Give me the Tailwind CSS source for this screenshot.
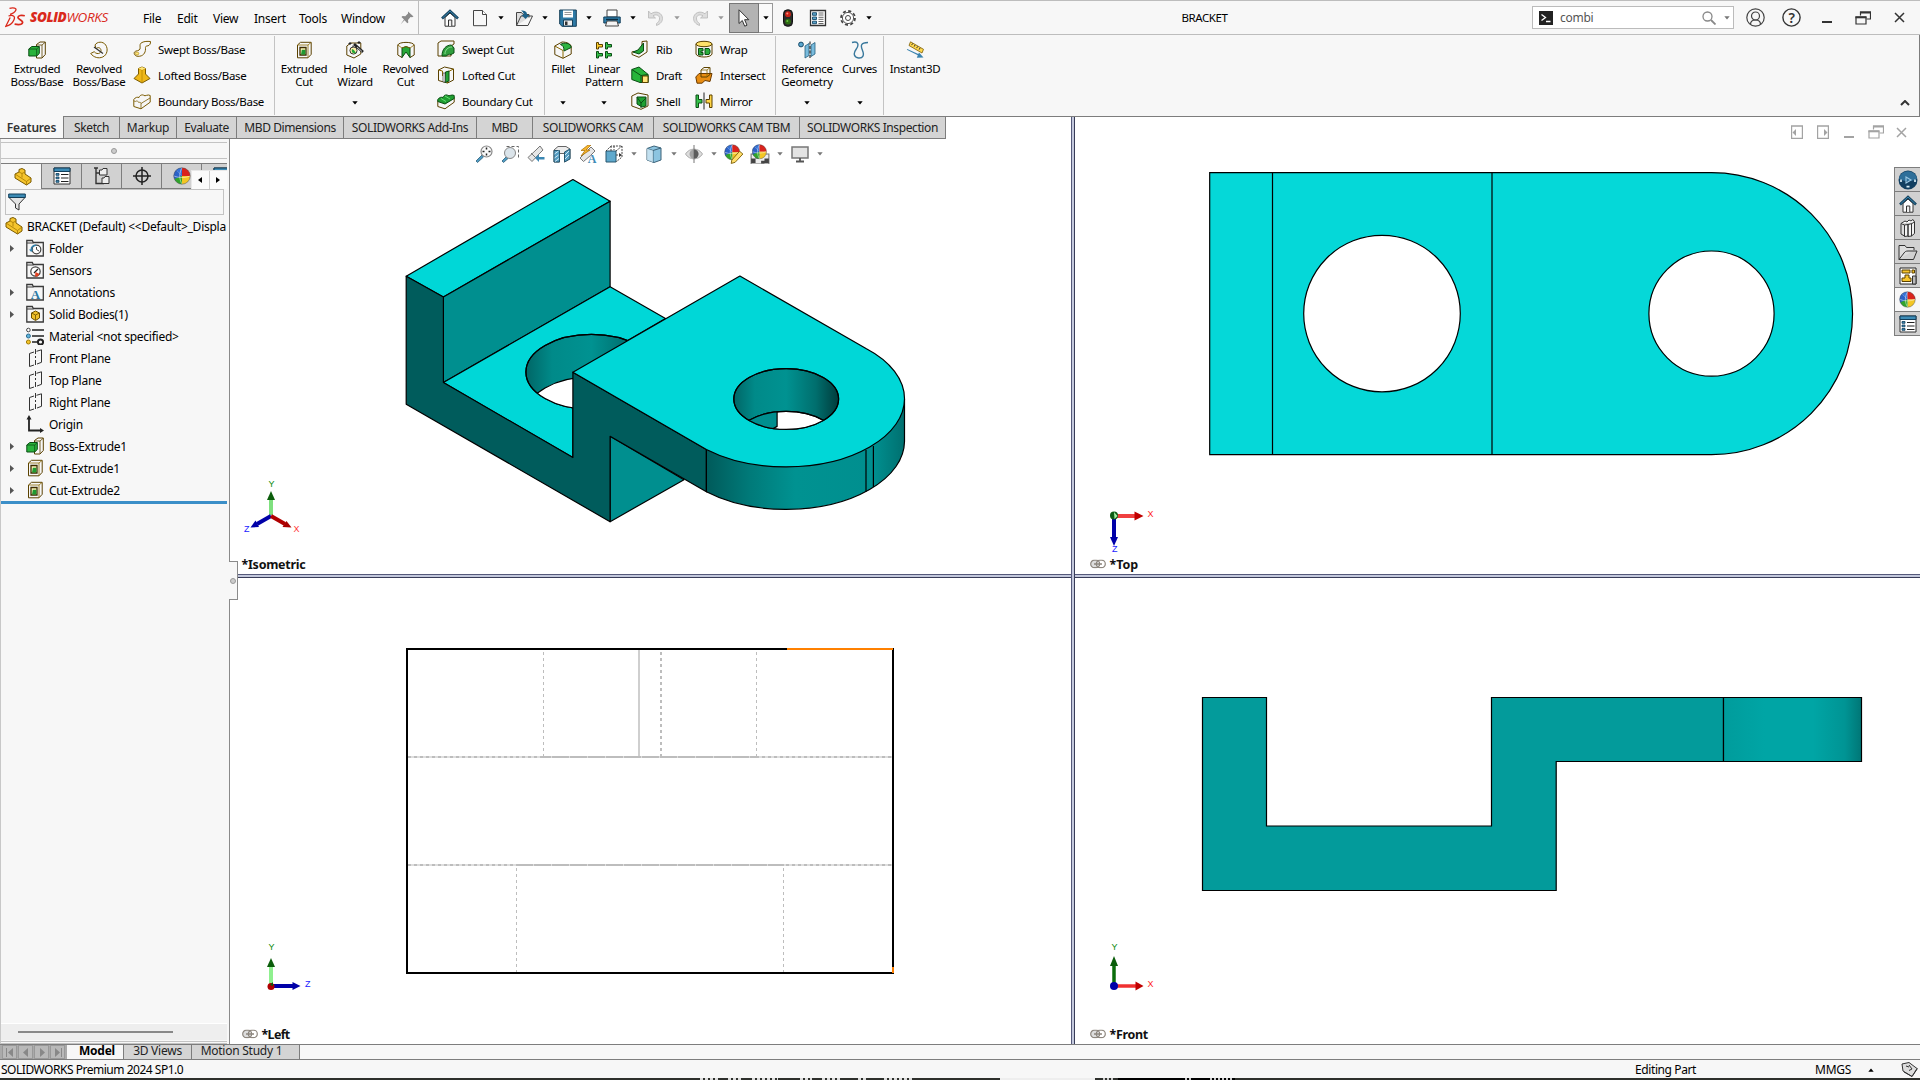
<!DOCTYPE html>
<html lang="en">
<head>
<meta charset="utf-8">
<title>SOLIDWORKS - BRACKET</title>
<script src="https://cdn.jsdelivr.net/npm/@tailwindcss/browser@4"></script>
</head>
<body class="w-[1920px] h-[1080px] overflow-hidden bg-[#f7f7f7] text-black font-['Noto_Sans','Open_Sans',sans-serif] text-[12px] leading-[13px] tracking-[-0.25px]">

<svg class="hidden">
  <defs>
    <linearGradient id="gold" x1="0" y1="0" x2="1" y2="1"><stop offset="0" stop-color="#ffe878"/><stop offset="1" stop-color="#e5ab10"/></linearGradient>
    <linearGradient id="paper" x1="0" y1="0" x2="1" y2="1"><stop offset="0" stop-color="#fff"/><stop offset="1" stop-color="#c8c8c8"/></linearGradient>
  </defs>
  <symbol id="dn" viewBox="0 0 6 4"><path d="M.3.3h5.4L3 3.4z"/></symbol>
  <symbol id="ico-home" viewBox="0 0 18 18"><path d="M4 8.500v8.700h10V8.500L9 4z" fill="#fff" stroke="#333"/><path d="M7.500 17v-6h3.300v6" fill="#eee" stroke="#333"/><path d="M1 9.500 9 2l8 7.500" fill="none" stroke="#123e5a" stroke-width="2.600"/><path d="M1.500 9 9 2l7.500 7" fill="none" stroke="#3a86ad" stroke-width="1"/></symbol>
  <symbol id="ico-new" viewBox="0 0 18 18"><path d="M2.500 1.500h9l4 4v11.200h-13z" fill="url(#paper)" stroke="#444"/><path d="M11.500 1.500v4h4" fill="#fff" stroke="#444"/></symbol>
  <symbol id="ico-open" viewBox="0 0 18 18"><path d="M1.500 16.500v-13h5l1.500 2h6v3" fill="#ddd" stroke="#444"/><path d="m1.500 16.500 4.500-9.500h11.500l-4.500 9.500z" fill="url(#paper)" stroke="#444"/><path d="M6 1.500c4 0 6 1 6 4.500h2.500L10.500 10 6.500 6h2.200c0-2-.7-3-2.700-4.500z" fill="#1d6289"/></symbol>
  <symbol id="ico-save" viewBox="0 0 18 18"><path d="M.7 1h16.600v16.300H3L.7 15z" fill="#2e7aa6" stroke="#173f58"/><path d="M4 1.500h10v7H4z" fill="#fff"/><path d="M5.500 3.500h7M5.500 5.500h7" stroke="#999"/><path d="M4.500 11h9v6h-9z" fill="#eee" stroke="#173f58"/><path d="M6 12.500h2.500V16H6z" fill="#333"/></symbol>
  <symbol id="ico-print" viewBox="0 0 18 18"><path d="M4 1h10v7H4z" fill="#fff" stroke="#444"/><path d="M.8 8h16.400v6H.8z" fill="#2f7fab" stroke="#123e5a"/><path d="M3 10.500h12" stroke="#0d2c40" stroke-width="1.500"/><path d="m4 12-1.500 5h13L14 12z" fill="#f4f4f4" stroke="#444"/></symbol>
  <symbol id="ico-undo" viewBox="0 0 18 18"><path d="M1.500 2v7h7L6 6.800c3-2 7-.5 6.500 3.200-.2 2-1.500 3.500-3 4.500v2c4-1.500 6-4 6-7C15.500 4 9 1 4 4.800z" fill="#ddd" stroke="#b8b8b8" stroke-width=".8"/></symbol>
  <symbol id="ico-light" viewBox="0 0 18 18"><rect x="4.500" y=".8" width="9" height="16.500" rx="4" fill="#2b2b2b" stroke="#111"/><circle cx="9" cy="5.200" r="2.900" fill="#c92318"/><circle cx="8.300" cy="4.500" r="1" fill="#ff8d7e"/><circle cx="9" cy="12.600" r="2.900" fill="#2c6b12"/><circle cx="8.300" cy="12" r="1" fill="#67c23c"/></symbol>
  <symbol id="ico-opts" viewBox="0 0 18 18"><path d="M1.500 1.500h15v15h-15z" fill="#fff" stroke="#333" stroke-width="1.300"/><path d="M3.500 3.700h4v2.600h-4zM3.500 8h4v2.500h-4zM3.500 12.200h4v2.500h-4z" fill="#5aa3cb" stroke="#174a68" stroke-width=".9"/><path d="M9.500 4h5M9.500 6h5M9.500 8.300h5M9.500 10.300h5M9.500 12.500h5M9.500 14.500h5" stroke="#555" stroke-width=".9"/></symbol>
  <symbol id="ico-gear" viewBox="0 0 18 18"><circle cx="9" cy="9" r="7" fill="#fff" stroke="#444" stroke-width="1.800" stroke-dasharray="3.100 2.400"/><circle cx="9" cy="9" r="5.600" fill="#fff" stroke="#555" stroke-width="1"/><circle cx="9" cy="9" r="2.500" fill="#fff" stroke="#444"/></symbol>

  <symbol id="ico-boss" viewBox="0 0 18 18"><path d="M8.500 3.500 12 1h5.300v12.500L14 17H8.500z" fill="url(#gold)" stroke="#5a4100"/><path d="M14 4v12.500M14 4l3-2.600M8.500 4H14" stroke="#5a4100" fill="none" stroke-width=".8"/><path d="m.8 8 3-2.500h7.500v7L8.700 15H.8z" fill="#29b33b" stroke="#0b4d14"/><path d="M.8 8h7.900v7M8.700 8l2.600-2.500" stroke="#0b4d14" fill="none" stroke-width=".8"/></symbol>
  <symbol id="ico-revolve" viewBox="0 0 18 18"><path d="M5 4c2-3.500 8-4 10.700 0s1.500 10-3 12c-4 1.800-9 .5-12-3.500l3.500-1.800c1.500 1.800 4 2.500 5.500 1.300 2-1.500 1.500-4 0-5-1.300-.8-2.600-.3-3.500.8z" fill="url(#gold)" stroke="#7a5a00"/><path d="m4 6 9 6.500" stroke="#333" stroke-width="1.200"/></symbol>
  <symbol id="ico-swept" viewBox="0 0 18 18"><path d="M1.500 12c1-1.500 5-1 5.500-3 .5-3-1-5 2-6.500 2.500-1.300 5-1.200 8.500-1 .3 2-1 4-2.500 4.300-3 .4-2.500 1-2.500 3.200C12.500 13 10 16.500 5 16.300c-3 0-4.500-2.500-3.500-4.300z" fill="url(#gold)" stroke="#7a5a00"/><ellipse cx="4" cy="13.500" rx="1.800" ry="1.500" fill="#ffe67a" stroke="#a87d00" stroke-width=".6"/></symbol>
  <symbol id="ico-loft" viewBox="0 0 18 18"><path d="M5.500 2.500 9 1l3.500 1.500v5.500L17 12.500 9 17l-8-4.500L5.500 8z" fill="#efb81a" stroke="#7a5a00"/><path d="M5.500 2.500 9 4l3.500-1.500M9 4v13" stroke="#b98800" fill="none" stroke-width=".8"/><path d="M5.500 2.500 9 1l3.500 1.500L9 4z" fill="#ffe67a"/></symbol>
  <symbol id="ico-boundary" viewBox="0 0 18 18"><path d="M.8 7.500C2.500 5 4.500 5 6 5.500c1-3 4-3 5-2s4-1.500 6.200 0v6.700L8 16.800.8 14.500z" fill="url(#gold)" stroke="#7a5a00"/><path d="M.8 8.500c2 2.500 3-1 4 1s2.500-.5 3.200 2l9-5.500M8 11.500v5" fill="none" stroke="#7a5a00" stroke-width=".8"/></symbol>
  <symbol id="ico-bcut" viewBox="0 0 18 18"><path d="M.8 8.500 8 11l9.200-5.500v4.700L8 16.800.8 14.500z" fill="url(#gold)" stroke="#5a4100"/><path d="M.8 7.500C2.500 5 4.500 5 6 5.500c1-3 4-3 5-2s4-1.500 6.200 0v3L8 12 .8 9.500z" fill="#1f9e31" stroke="#0b4d14"/><path d="m4 6.500 5 3M8 4l5 3" stroke="#64dd70"/></symbol>
  <symbol id="ico-cut" viewBox="0 0 18 18"><path d="m2.500 4 3-2.700h10.700v12L13 16.800H2.500z" fill="url(#gold)" stroke="#5a4100"/><path d="M2.500 4H13v12.500M13 4l3-2.500" fill="none" stroke="#8a6800" stroke-width=".8"/><path d="M5 6.500h6v7.500H5z" fill="#fff4b8" stroke="#3d2c00" stroke-width="1.300"/><path d="M6.800 8.800h3.600v4.600L6 13.600z" fill="#1f9a32"/></symbol>
  <symbol id="ico-hole" viewBox="0 0 18 18"><path d="m.8 5 4-3h10v11L8 17l-7.200-3z" fill="url(#gold)" stroke="#5a4100"/><circle cx="7.500" cy="9.500" r="3.600" fill="#ffefaa" stroke="#333"/><path d="M6 8c-1 3 .5 5 4 4L8 9z" fill="#25a838"/><path d="m8 3 9 8" stroke="#222" stroke-width="2.600"/><path d="m11 6 5 4.500" stroke="#bbb"/><path d="M4 1v3M2.500 2.500h3M13 0v3M11.500 1.500h3M7 4.500v2" stroke="#222"/></symbol>
  <symbol id="ico-rcut" viewBox="0 0 18 18"><path d="M.8 4C2 .5 16 .5 17.200 4v10L13 16.500 9 8l-4 8.500L.8 14z" fill="url(#gold)" stroke="#5a4100"/><path d="M9 5.500 13 7v9.500L9 11l-4 5.500V7z" fill="#26a838" stroke="#0b4d14"/><path d="M.8 4 5 7l4-1.500L13 7l4.200-3" fill="none" stroke="#8a6800" stroke-width=".8"/></symbol>
  <symbol id="ico-scut" viewBox="0 0 18 18"><path d="m1 3 3-2h13v3l-3 2v10H1z" fill="url(#gold)" stroke="#5a4100"/><path d="M5 16C5 9 9 5 14.500 5l2.500 3v5l-3 1.500c-2-.5-4 0-4.500 1.500z" fill="#2f9e3d" stroke="#0b4d14"/><path d="M8 14c0-4 3-7 7-7" stroke="#8adf8f" fill="none"/></symbol>
  <symbol id="ico-lcut" viewBox="0 0 18 18"><path d="m1.500 4 6-3 9 2v11l-6 3-9-2.500z" fill="url(#gold)" stroke="#5a4100"/><path d="M10.500 17V6l6-3M1.500 4l4 1v5" fill="none" stroke="#8a6800"/><path d="m8.500 6 3.500-1v10l-4 1.500z" fill="#23a335" stroke="#0b4d14"/><path d="M6 7h2v9H6z" fill="#fff" stroke="#444" stroke-width=".7"/></symbol>
  <symbol id="ico-fillet" viewBox="0 0 18 18"><path d="M.8 5 8 1c5 0 9.200 2 9.200 5v7L9 17.300.8 13.500z" fill="url(#gold)" stroke="#5a4100"/><path d="M.8 5 9 9.500v7.800" fill="none" stroke="#8a6800"/><path d="M6.500 3.500C10 1 17 2 17.200 6.500L10 10C10 6 9 4.500 6.500 3.500z" fill="#2fb441" stroke="#0b4d14"/></symbol>
  <symbol id="ico-lpat" viewBox="0 0 18 18"><path d="M1.500 1.500h2v2h4v2.500h-4v2h-2z" fill="#ffcf2e" stroke="#5a4100"/><path d="M10.500 1.500h2v2h4v2.500h-4v2h-2zM1.500 10.500h2v2h4v2.500h-4v2h-2zM10.500 10.500h2v2h4v2.500h-4v2h-2z" fill="#35c24a" stroke="#0b4d14"/></symbol>
  <symbol id="ico-rib" viewBox="0 0 18 18"><path d="m11 1.500 5-.5v11L8 17.300 1 14.500v-2.700l10-1z" fill="url(#gold)" stroke="#5a4100"/><path d="M12.500 3v8L8 14l-6-2 5-2z" fill="#27a63a" stroke="#0b4d14"/></symbol>
  <symbol id="ico-draft" viewBox="0 0 18 18"><path d="M.8 3.500 8 1l9.200 7.500v8H9L.8 13.500z" fill="#27b53b" stroke="#0b4d14"/><path d="M.8 3.500 10 9.500l7-1M10 9.500v7" fill="none" stroke="#0b4d14"/><path d="M11.500 10h5.500v6.500h-5.500z" fill="#ffe57a" stroke="#5a4100"/></symbol>
  <symbol id="ico-shell" viewBox="0 0 18 18"><path d="M.8 4 7 1l10 2v11l-7 3.300L.8 14z" fill="url(#gold)" stroke="#5a4100"/><path d="M6 5h9v9l-4 1-5-3z" fill="#1fa032" stroke="#0b4d14"/><path d="m6 5 4 6v5M10 11l5-5" stroke="#0b4d14" fill="none"/></symbol>
  <symbol id="ico-wrap" viewBox="0 0 18 18"><path d="M1 4v10c1 4 15 4 16 0V4z" fill="url(#gold)" stroke="#5a4100"/><ellipse cx="9" cy="4" rx="8" ry="2.700" fill="#ffe26a" stroke="#5a4100"/><path d="M3.500 8.500H8V11H6v1.500h2V15H3.500zM10 8.500h4c1.500 2 1.500 4 0 6h-4z" fill="#2aaf3d" stroke="#0b4d14"/></symbol>
  <symbol id="ico-inter" viewBox="0 0 18 18"><path d="M.8 11 4 7.500h13l-2 8-5-1-3 2.700H2z" fill="#e88d12" stroke="#6b3a00"/><path d="M6 4 9 1.500h6v7L12 11H6z" fill="url(#gold)" stroke="#5a4100"/><path d="M6 4h6v7M12 4l3-2.500" stroke="#8a6800" fill="none" stroke-width=".8"/></symbol>
  <symbol id="ico-mirror" viewBox="0 0 18 18"><path d="M9 .5v17" stroke="#222"/><path d="M1 3h2.500v4.500H7v3.500H3.500v4.500H1z" fill="#35c24a" stroke="#0b4d14"/><path d="M17 3h-2.500v4.500H11v3.500h3.500v4.500H17z" fill="#ffd545" stroke="#5a4100"/></symbol>
  <symbol id="ico-refgeo" viewBox="0 0 18 18"><circle cx="3" cy="3.500" r="2.400" fill="#5ba6ce" stroke="#174a68"/><path d="m7 5 4-2.500v12L7 17zM13 4l4-2.500v11.500l-4 2.500z" fill="#79bbdd" stroke="#27607f" stroke-width=".8"/><path d="M12 .5v17" stroke="#111" stroke-dasharray="3 1.500"/></symbol>
  <symbol id="ico-curves" viewBox="0 0 18 18"><path d="M1 1.500c7-2 7 3 4 7s-2 8 2.500 8.500 6-3 4-7.500-2-8 5.500-8" fill="none" stroke="#39789c" stroke-width="1.400"/></symbol>
  <symbol id="ico-inst" viewBox="0 0 18 18"><path d="m4.500.8 13 7.500-1.500 3.700L3 4.500z" fill="#ffd84e" stroke="#7a5a00" stroke-width=".8"/><path d="m6.500 2.500-.8 1.600M9 4l-.8 1.600M11.500 5.500l-.8 1.600M14 7l-.8 1.600" stroke="#333"/><path d="m.8 8.800 11 5.500-1 2.500 6.700-.4-4.500-5-.7 1.500-11-5z" fill="#3a83ae"/></symbol>

  <symbol id="ico-part" viewBox="0 0 18 18"><path d="m1 6 4-2V1.500L8 .5l3 1.500v4l6 4v4l-4.500 3L1 10z" fill="#f5c42c" stroke="#7a5a00"/><path d="m1 6 11.500 7.500V17M12.500 13.500 17 10M5 4l3 1.500v4M8 5.500 11 4" fill="none" stroke="#a67a00" stroke-width=".8"/></symbol>
  <symbol id="ico-prop" viewBox="0 0 18 18"><path d="M1 1h16v16H1z" fill="#fff" stroke="#333"/><path d="M1 1h16v3.500H1z" fill="#3e8cb6" stroke="#123e5a"/><path d="M3 6.500h3v1.800H3zM3 10h3v1.800H3zM3 13.500h3v1.800H3z" fill="#3e8cb6" stroke="#123e5a" stroke-width=".8"/><path d="M8 7.500h7.500M8 11h7.500M8 14.500h7.500" stroke="#222"/></symbol>
  <symbol id="ico-config" viewBox="0 0 18 18"><path d="M3 1v15.500h8M3 6h5M1 1h4" fill="none" stroke="#333" stroke-width="1.400"/><path d="M6.500 3H9l1-1.500h4V8H6.500zM9 11h2l1-1.500h4v7H9z" fill="#eee" stroke="#333"/></symbol>
  <symbol id="ico-dimx" viewBox="0 0 18 18"><circle cx="9" cy="9" r="6" fill="none" stroke="#222" stroke-width="1.500"/><path d="M9 0v18M0 9h18" stroke="#222" stroke-width="1.500"/></symbol>
  <symbol id="ico-ball" viewBox="0 0 18 18"><path d="M9 9 3 3a8.200 8.200 0 0 1 6-2.300z" fill="#3573d8"/><path d="M9 9 2.500 14A8.200 8.200 0 0 1 3 3z" fill="#2b62c8"/><path d="M9 9V.7A8.200 8.200 0 0 1 17.200 9z" fill="#d9231d"/><path d="M9 9h8.200A8.200 8.200 0 0 1 9 17.200z" fill="#f3c623"/><path d="M9 9v8.200A8.200 8.200 0 0 1 1.500 12z" fill="#30a42b"/><path d="M9 .9c-3 5-3 11 0 16.200M1 9c5 2 11 2 16 0" stroke="#fff" stroke-opacity=".55" fill="none" stroke-width=".9"/><circle cx="9" cy="9" r="8.200" fill="none" stroke="#444" stroke-opacity=".45"/></symbol>
  <symbol id="ico-funnel" viewBox="0 0 18 18"><path d="M1 4.500h16L11 11v6l-3.500-2V11z" fill="#e4e4e4" stroke="#333"/><path d="M.7 1h16.600v3.500H.7z" fill="#3b8ab4" stroke="#123e5a"/></symbol>
  <symbol id="folder" viewBox="0 0 18 18"><path d="M.8 17V1.500h5.500l1 2h10V17z" fill="url(#paper)" stroke="#3b3b3b" stroke-width="1.300"/><path d="M1 4h6.500" stroke="#3b3b3b"/></symbol>
  <symbol id="ico-folder" viewBox="0 0 18 18"><use href="#folder" width="18" height="18"/><circle cx="10.500" cy="10.500" r="4.300" fill="#fff" stroke="#444" stroke-width="1.200"/><path d="M10.500 8v2.500L13 12" fill="none" stroke="#444"/><path d="M3 10.500h4.500L5.200 13z" fill="#2f7fab"/><path d="M5.200 11c0-3 2-4.800 5-4.800" fill="none" stroke="#2f7fab" stroke-width="1.400"/></symbol>
  <symbol id="ico-sensor" viewBox="0 0 18 18"><use href="#folder" width="18" height="18"/><circle cx="9.500" cy="10.500" r="4.700" fill="#fff" stroke="#444" stroke-width="1.200"/><path d="m8 12 4-4" stroke="#222" stroke-width="1.300"/><path d="m9.500 11 4 2-2 2.500h-2.500z" fill="#e2401f"/></symbol>
  <symbol id="ico-annot" viewBox="0 0 18 18"><use href="#folder" width="18" height="18"/><text x="9.200" y="15.500" font-family="Liberation Serif" font-size="13" font-weight="bold" text-anchor="middle" fill="#2a7aa5">A</text></symbol>
  <symbol id="ico-solid" viewBox="0 0 18 18"><use href="#folder" width="18" height="18"/><path d="m5.500 8 4-2 4 2v5l-4 2.500-4-2.500z" fill="#f0c02a" stroke="#6b4f00"/><path d="m5.500 8 4 2 4-2M9.500 10v5" fill="none" stroke="#6b4f00" stroke-width=".8"/></symbol>
  <symbol id="ico-mat" viewBox="0 0 18 18"><path d="M6 3h12M6 9h12M6 15h5" stroke="#222" stroke-width="1.600"/><circle cx="2.400" cy="3" r="1.800" fill="#fff" stroke="#444"/><circle cx="2.400" cy="9" r="2" fill="#5fb4dc" stroke="#2b6c90"/><circle cx="2.400" cy="15" r="2" fill="#f6c52b" stroke="#a07a00"/><circle cx="14.500" cy="15" r="2.600" fill="none" stroke="#222" stroke-width="2"/></symbol>
  <symbol id="ico-plane" viewBox="0 0 18 18"><path d="M3.500 4.500 8 3M10.500 2.300l5-1.500v12.500l-4.500 1.700M8 16l-4.500 1.500v-13" fill="none" stroke="#333"/><path d="M9.500 0v18" stroke="#333" stroke-dasharray="5 2 2 2"/></symbol>
  <symbol id="ico-origin" viewBox="0 0 18 18"><path d="M3 3v12.500h12" fill="none" stroke="#222" stroke-width="1.800"/><path d="M.5 4.500 3 0l2.500 4.500zM14 13l4 2.500-4 2.500z" fill="#222"/></symbol>

  <symbol id="ico-fit" viewBox="0 0 18 18"><path d="m7 10-6 6 1.500 1.500L8.500 12z" fill="#4e9cc4" stroke="#2d5e78" stroke-width=".8"/><circle cx="11.500" cy="6.500" r="5.500" fill="#fafafa" stroke="#888" stroke-width="1.200"/><path d="M11.500 2.500v2M11.500 8.500v2M7.500 6.500h2M13.500 6.500h2" stroke="#222" stroke-width="1.500"/></symbol>
  <symbol id="ico-area" viewBox="0 0 18 18"><path d="M5.500 1.500h12v11" fill="none" stroke="#666" stroke-dasharray="3 2"/><path d="m5 12-4 4 1.500 1.500L7 13.500z" fill="#4e9cc4" stroke="#2d5e78" stroke-width=".8"/><circle cx="9" cy="8" r="5.500" fill="#dbe4ea" stroke="#888"/></symbol>
  <symbol id="ico-prev" viewBox="0 0 18 18"><path d="m13 1-4 4-8 7.500 4 4L12 9l4-4z" fill="#e6e6e6" stroke="#777"/><path d="m4 8 5 5" stroke="#777"/><path d="m8 13 4-3.500V12h5.500v2.500H12V17z" fill="#3c87b3"/></symbol>
  <symbol id="ico-sect" viewBox="0 0 18 18"><path d="m1 5 4-3.500h8L17 4v9.500l-5.500 3.500V8.500H6.500V17H1z" fill="#ececec" stroke="#666"/><path d="M1 5.500h5.500V17H1zM11.500 7 17 4v10l-5.500 3z" fill="#559dc2" stroke="#28566e"/><path d="m1.500 9 4-3M1.500 13l4-3M2 16.500l4-3M12 10l4-4M12 14l4-4" stroke="#cfe8f5"/></symbol>
  <symbol id="ico-dyn" viewBox="0 0 18 18"><path d="m12 2-4 4-7 7 3.500 3.500 7-6L16 6z" fill="#e6e6e6" stroke="#777"/><path d="m9 0-7 5.500h4L2 11l9-6H7l5-5z" fill="#f6b52e" stroke="#a66b00" stroke-width=".7"/><text x="13" y="17.500" font-family="Liberation Serif" font-weight="bold" font-size="12" text-anchor="middle" fill="#3f8cb8">A</text></symbol>
  <symbol id="ico-orient" viewBox="0 0 18 18"><path d="M1 6h10v11H1z" fill="#5fa9cd" stroke="#28566e"/><path d="m1 6 5-5h11v11l-6 5M11 6l6-5M6 1v5M11 10h4M9 1v4" fill="none" stroke="#444" stroke-dasharray="2 1"/><path d="m14 8 3 2-3 2z" fill="#333"/></symbol>
  <symbol id="ico-disp" viewBox="0 0 18 18"><path d="m2 3.500 7-2.500 7 2v12l-7 2.500-7-2.500z" fill="#8cc4e0" stroke="#3c6379"/><path d="m2 3.500 6 2 8-2.500M8 5.500v12" fill="none" stroke="#3c6379"/><path d="m2 3.500 6 2v11.700L2 15z" fill="#d9edf7" opacity=".7"/></symbol>
  <symbol id="ico-eye" viewBox="0 0 18 18"><path d="M.5 9c4-6.500 13-6.500 17 0-4 6.500-13 6.500-17 0z" fill="#ddd" stroke="#aaa"/><circle cx="9" cy="9" r="4.500" fill="#a3a3a3"/><path d="M9 0v18" stroke="#777"/><path d="M9 4.500a4.500 4.500 0 0 1 0 9z" fill="#5c5c5c"/></symbol>
  <symbol id="ico-editapp" viewBox="0 0 18 18"><use href="#ico-ball" width="15" height="15"/><path d="m7 14.500 7-8 3 2.500-7 7.500-3.500 1z" fill="#ffdf6b" stroke="#7a5a00" stroke-width=".8"/></symbol>
  <symbol id="ico-scene" viewBox="0 0 18 18"><path d="M1 9h16v9H1z" fill="#eee" stroke="#777"/><path d="M1 13h4v4H1zM5 9h3v4H5zM13 13h4v4h-4zM10 15h3v2.500h-3z" fill="#444"/><use href="#ico-ball" x="1.500" width="14" height="14"/></symbol>
  <symbol id="ico-monitor" viewBox="0 0 18 18"><path d="M1 2h16v11H1z" fill="#e3e3e3" stroke="#777" stroke-width="1.500"/><path d="M9 13v3.500M5 16.500h8" stroke="#555" stroke-width="1.800"/></symbol>

  <symbol id="ico-books" viewBox="0 0 18 18"><path d="M2 4.500 5.500 6v11L2 15z" fill="#ddd" stroke="#333"/><path d="M5.500 6 9 5.500V17l-3.500.5zM9 5.500l3.500-.8V17L9 17.500zM12.500 4.700 15.500 3v11.500L12.500 17z" fill="#f4f4f4" stroke="#333"/><path d="M2 4.500 6 2l2 1 2-2 2 1 2-1.500L15.500 3" fill="#fff" stroke="#333"/></symbol>
  <symbol id="ico-fold2" viewBox="0 0 20 18"><path d="M1 16.500V2.500h6l1.500 2H16V7" fill="#ddd" stroke="#333"/><path d="m1 16.500 5-6.500c1-1.500 2-2 4-2h9l-3.500 8.500z" fill="url(#paper)" stroke="#333"/></symbol>
  <symbol id="ico-view" viewBox="0 0 18 18"><path d="M1 1h16v16H1z" fill="#fff" stroke="#222"/><path d="M3 3h8v3H3zM13 3h2.500v3H13zM6 8h4v3h2v3.500H3V11h3z" fill="#f6c52b" stroke="#5a4100"/><path d="M13.500 9H17v8h-3.500z" fill="#bbb" stroke="#333"/></symbol>
  <symbol id="ico-3dx" viewBox="0 0 20 20"><circle cx="10" cy="10" r="9.500" fill="#123f61"/><path d="M1 8.500a9.200 9.200 0 0 1 18 0c-5 3.500-13 3.500-18 0z" fill="#2f6f9a"/><path d="m8 7 5 3-5 3z" fill="none" stroke="#9cc8e4" stroke-width="1.100"/><path d="M3 9.500v2.500M17 9.500v2.500M8.500 16.700h3" stroke="#d9edf7" stroke-width="1.700"/></symbol>
  <symbol id="ico-link" viewBox="0 0 16 9"><rect x=".7" y=".7" width="9" height="7.500" rx="3.700" fill="#ddd" stroke="#8d867e" stroke-width="1.200"/><rect x="6.300" y=".7" width="9" height="7.500" rx="3.700" fill="none" stroke="#8d867e" stroke-width="1.200"/><path d="M4 4.500h8" stroke="#8d867e" stroke-width="1.300"/></symbol>
  <symbol id="ico-restore" viewBox="0 0 16 14"><path d="M5.500 4.500v-3.500h10v7h-4" fill="none" stroke="currentColor" stroke-width="1.200"/><path d="M5 1.500h11" stroke="currentColor" stroke-width="2"/><path d="M1 6h10v7H1z" fill="none" stroke="currentColor" stroke-width="1.200"/><path d="M.4 6.300h11" stroke="currentColor" stroke-width="2"/></symbol>
</svg>

<div class="flex flex-col w-[1920px] h-[1080px]">

  <!-- Title bar -->
  <header class="flex items-center h-[35px] shrink-0 border-t border-b border-[#bdbdbd] bg-[#f7f7f7]">
    <div class="flex items-center w-[143px] pl-[5px] text-[#da291c]">
      <svg class="w-[21px] h-[21px]" viewBox="0 0 21 21" fill="none" stroke="#da291c"><path d="M4.500 1.300c4-.9 7.300-.2 6.300 2C9.800 5.500 7.500 6.800 5 7.300M3.500 9c4.500-1.500 7 .2 5.500 3.700C7.700 15.800 4 18.600.8 19.300L5.200 10.500" stroke-width="1.300"/><path d="M19.800 8.800c-3.500-.9-6.600-.3-6.900 1.500-.3 2 5.300 3 4.700 5.300-.5 2-4.300 2.200-8 1.600" stroke-width="1.700"/></svg>
      <span class="ml-1 font-['Open_Sans','Noto_Sans',sans-serif] text-[13.500px] tracking-[-0.4px] italic whitespace-nowrap"><b class="font-extrabold">SOLID</b>WORKS</span>
    </div>
    <nav class="flex items-center pt-[2px]">
      <span class="w-[34px]">File</span><span class="w-[36px]">Edit</span><span class="w-[41px]">View</span><span class="w-[45px]">Insert</span><span class="w-[42px]">Tools</span><span class="w-[54px]">Window</span>
    </nav>
    <div class="flex items-center justify-center w-[24px] h-full border-r border-[#bdbdbd]">
      <svg class="w-[14px] h-[14px]" viewBox="0 0 14 14"><path d="m8 .5 5.500 5-1.500.8-1.500-.3-2.500 3 .3 2.500-1 .8-2.800-3-4 4.200 3.500-5L1.500 6l1-1 2.800.2L8 2.500z" fill="#8a8a8a"/></svg>
    </div>
    <div class="flex items-center pl-[22px] h-full text-[#333]">
      <svg class="size-[18px] mr-3"><use href="#ico-home"/></svg>
      <svg class="size-[18px]"><use href="#ico-new"/></svg><span class="flex justify-center w-[26px] pr-0.5"><svg class="w-[6px] h-[4px]"><use href="#dn"/></svg></span>
      <svg class="size-[18px]"><use href="#ico-open"/></svg><span class="flex justify-center w-[26px] pr-0.5"><svg class="w-[6px] h-[4px]"><use href="#dn"/></svg></span>
      <svg class="size-[18px]"><use href="#ico-save"/></svg><span class="flex justify-center w-[26px] pr-0.5"><svg class="w-[6px] h-[4px]"><use href="#dn"/></svg></span>
      <svg class="size-[18px]"><use href="#ico-print"/></svg><span class="flex justify-center w-[26px] pr-0.5"><svg class="w-[6px] h-[4px]"><use href="#dn"/></svg></span>
      <svg class="size-[18px]"><use href="#ico-undo"/></svg><span class="flex justify-center w-[26px] pr-0.5"><svg class="w-[6px] h-[4px] fill-[#999]"><use href="#dn"/></svg></span>
      <svg class="size-[18px] -scale-x-100"><use href="#ico-undo"/></svg><span class="flex justify-center w-[20px] pl-1"><svg class="w-[6px] h-[4px] fill-[#999]"><use href="#dn"/></svg></span>
      <span class="flex items-center justify-center w-[30px] h-[30px] bg-[#b3b3b3] border border-[#777]"><svg class="w-[14px] h-[18px]" viewBox="0 0 14 18"><path d="M2 .8v13.700l3.300-3 2.400 5.700 2.300-1-2.400-5.500h4.200z" fill="#fff" stroke="#333"/></svg></span>
      <span class="flex items-center justify-center w-[14px] h-[30px] border border-l-0 border-[#999] bg-[#fafafa]"><svg class="w-[6px] h-[4px]"><use href="#dn"/></svg></span>
      <svg class="size-[18px] ml-1.5"><use href="#ico-light"/></svg>
      <svg class="size-[18px] ml-3"><use href="#ico-opts"/></svg>
      <svg class="size-[18px] ml-3"><use href="#ico-gear"/></svg>
      <span class="flex justify-center w-[26px] pr-0.5"><svg class="w-[6px] h-[4px]"><use href="#dn"/></svg></span>
    </div>
    <div class="flex-1 text-center pr-[6px] text-[11.500px] tracking-[-0.4px]">BRACKET</div>
    <div class="flex items-center w-[202px] h-[23px] border border-[#bbb] bg-white mr-[3px] pl-[6px] pr-[3px]">
      <svg class="w-[14px] h-[14px]" viewBox="0 0 14 14"><path d="M0 0h14v14H0z" fill="#222"/><path d="m2.500 3.500 4 3-4 3M7 10.500h4.500" fill="none" stroke="#fff" stroke-width="1.300"/></svg>
      <span class="ml-[7px] flex-1 text-[#555] -mt-px">combi</span>
      <svg class="w-[14px] h-[14px] mr-2" viewBox="0 0 14 14"><circle cx="5.500" cy="5.500" r="4.500" fill="none" stroke="#888" stroke-width="1.300"/><path d="m9 9 4.500 4.500" stroke="#888" stroke-width="1.800"/></svg>
      <svg class="w-[6px] h-[4px] fill-[#777]"><use href="#dn"/></svg>
    </div>
    <div class="flex items-center w-[183px] text-[#333]">
      <span class="flex justify-center w-[36px]"><svg class="size-[19px]" viewBox="0 0 19 19" fill="none" stroke="#444" stroke-width="1.200"><circle cx="9.500" cy="9.500" r="8.700"/><circle cx="9.500" cy="8" r="4"/><path d="M4.500 16.500c0-3 2-4.500 5-4.500s5 1.500 5 4.500"/></svg></span>
      <span class="flex justify-center w-[36px]"><svg class="size-[19px]" viewBox="0 0 19 19"><circle cx="9.500" cy="9.500" r="8.600" fill="none" stroke="#333" stroke-width="1.400"/><text x="9.500" y="14.500" text-anchor="middle" font-size="14" font-weight="600" fill="#333">?</text></svg></span>
      <span class="flex justify-center w-[36px] pt-[9px]"><i class="block w-[10px] h-[2px] bg-[#333]"></i></span>
      <span class="flex justify-center w-[36px]"><svg class="w-[16px] h-[14px]"><use href="#ico-restore"/></svg></span>
      <span class="flex justify-center w-[36px]"><svg class="size-[11px]" viewBox="0 0 11 11"><path d="m1 1 9 9M10 1l-9 9" stroke="#333" stroke-width="1.500"/></svg></span>
    </div>
  </header>

  <!-- Command manager -->
  <section class="flex h-[82px] shrink-0 border-b border-[#7d7d7d] text-center text-[11.500px] tracking-[-0.3px]">
    <div class="flex pl-[6px] border-r border-[#c3c3c3] my-px w-[275px]">
      <div class="flex flex-col items-center w-[62px] pt-[5px]"><svg class="size-[18px] mb-[3px]"><use href="#ico-boss"/></svg>Extruded<br>Boss/Base</div>
      <div class="flex flex-col items-center w-[62px] pt-[5px]"><svg class="size-[18px] mb-[3px]"><use href="#ico-revolve"/></svg>Revolved<br>Boss/Base</div>
      <div class="flex flex-col pl-[3px] text-left whitespace-nowrap">
        <span class="flex items-center h-[26px] gap-[7px]"><svg class="size-[18px]"><use href="#ico-swept"/></svg>Swept Boss/Base</span>
        <span class="flex items-center h-[26px] gap-[7px]"><svg class="size-[18px]"><use href="#ico-loft"/></svg>Lofted Boss/Base</span>
        <span class="flex items-center h-[26px] gap-[7px]"><svg class="size-[18px]"><use href="#ico-boundary"/></svg>Boundary Boss/Base</span>
      </div>
    </div>
    <div class="flex pl-[3px] border-r border-[#c3c3c3] my-px w-[270px]">
      <div class="flex flex-col items-center w-[52px] pt-[5px]"><svg class="size-[18px] mb-[3px]"><use href="#ico-cut"/></svg>Extruded<br>Cut</div>
      <div class="flex flex-col items-center w-[50px] pt-[5px]"><svg class="size-[18px] mb-[3px]"><use href="#ico-hole"/></svg>Hole<br>Wizard<svg class="w-[6px] h-[4px] mt-[13px]"><use href="#dn"/></svg></div>
      <div class="flex flex-col items-center w-[51px] pt-[5px]"><svg class="size-[18px] mb-[3px]"><use href="#ico-rcut"/></svg>Revolved<br>Cut</div>
      <div class="flex flex-col pl-[6px] text-left whitespace-nowrap">
        <span class="flex items-center h-[26px] gap-[7px]"><svg class="size-[18px]"><use href="#ico-scut"/></svg>Swept Cut</span>
        <span class="flex items-center h-[26px] gap-[7px]"><svg class="size-[18px]"><use href="#ico-lcut"/></svg>Lofted Cut</span>
        <span class="flex items-center h-[26px] gap-[7px]"><svg class="size-[18px]"><use href="#ico-bcut"/></svg>Boundary Cut</span>
      </div>
    </div>
    <div class="flex border-r border-[#c3c3c3] my-px w-[231px]">
      <div class="flex flex-col items-center w-[36px] pt-[5px]"><svg class="size-[18px] mb-[3px]"><use href="#ico-fillet"/></svg>Fillet<svg class="w-[6px] h-[4px] mt-[26px]"><use href="#dn"/></svg></div>
      <div class="flex flex-col items-center w-[46px] pt-[5px]"><svg class="size-[18px] mb-[3px]"><use href="#ico-lpat"/></svg>Linear<br>Pattern<svg class="w-[6px] h-[4px] mt-[13px]"><use href="#dn"/></svg></div>
      <div class="flex flex-col pl-[4px] text-left w-[64px]">
        <span class="flex items-center h-[26px] gap-[7px]"><svg class="size-[18px]"><use href="#ico-rib"/></svg>Rib</span>
        <span class="flex items-center h-[26px] gap-[7px]"><svg class="size-[18px]"><use href="#ico-draft"/></svg>Draft</span>
        <span class="flex items-center h-[26px] gap-[7px]"><svg class="size-[18px]"><use href="#ico-shell"/></svg>Shell</span>
      </div>
      <div class="flex flex-col pl-[4px] text-left">
        <span class="flex items-center h-[26px] gap-[7px]"><svg class="size-[18px]"><use href="#ico-wrap"/></svg>Wrap</span>
        <span class="flex items-center h-[26px] gap-[7px]"><svg class="size-[18px]"><use href="#ico-inter"/></svg>Intersect</span>
        <span class="flex items-center h-[26px] gap-[7px]"><svg class="size-[18px]"><use href="#ico-mirror"/></svg>Mirror</span>
      </div>
    </div>
    <div class="flex border-r border-[#c3c3c3] my-px w-[108px]">
      <div class="flex flex-col items-center w-[62px] pt-[5px]"><svg class="size-[18px] mb-[3px]"><use href="#ico-refgeo"/></svg>Reference<br>Geometry<svg class="w-[6px] h-[4px] mt-[13px]"><use href="#dn"/></svg></div>
      <div class="flex flex-col items-center w-[43px] pt-[5px]"><svg class="size-[18px] mb-[3px]"><use href="#ico-curves"/></svg>Curves<svg class="w-[6px] h-[4px] mt-[26px]"><use href="#dn"/></svg></div>
    </div>
    <div class="flex flex-col items-center w-[62px] pt-[6px]"><svg class="size-[18px] mb-[3px]"><use href="#ico-inst"/></svg>Instant3D</div>
    <div class="flex flex-1 items-end justify-end pr-[9px] pb-[10px] border-r border-[#7d7d7d]"><svg class="w-[10px] h-[6px]" viewBox="0 0 10 6"><path d="m1 5 4-4 4 4" fill="none" stroke="#333" stroke-width="2"/></svg></div>
  </section>

  <!-- Work area -->
  <main class="relative flex h-[927px] shrink-0">
    <!-- FeatureManager -->
    <aside class="flex flex-col w-[230px] pt-[22px] border-r border-[#8a8a8a] border-l border-l-[#c8c8c8] bg-[#f7f7f7]">
      <div class="flex items-center justify-center h-[17px] mt-[3px] mb-[4px] mr-[2px] border-t border-b border-[#c3c3c3]"><i class="size-[6px] rounded-full bg-[#ccc] border border-[#999]"></i></div>
      <div class="flex h-[26px] mr-[2px] border-t border-[#7d7d7d] overflow-hidden relative">
        <span class="flex items-center justify-center shrink-0 w-[41px] pl-[3px] border-r border-[#7d7d7d]"><svg class="size-[18px]"><use href="#ico-part"/></svg></span>
        <span class="flex items-center justify-center shrink-0 w-[40px] border-r border-b border-[#7d7d7d] bg-[#d1d1d1]"><svg class="size-[18px]"><use href="#ico-prop"/></svg></span>
        <span class="flex items-center justify-center shrink-0 w-[40px] border-r border-b border-[#7d7d7d] bg-[#d1d1d1]"><svg class="size-[18px]"><use href="#ico-config"/></svg></span>
        <span class="flex items-center justify-center shrink-0 w-[40px] border-r border-b border-[#7d7d7d] bg-[#d1d1d1]"><svg class="size-[18px]"><use href="#ico-dimx"/></svg></span>
        <span class="flex items-center justify-center shrink-0 w-[40px] border-r border-b border-[#7d7d7d] bg-[#d1d1d1]"><svg class="size-[18px]"><use href="#ico-ball"/></svg></span>
        <span class="flex items-center justify-center shrink-0 w-[40px] border-b border-[#7d7d7d] bg-[#d1d1d1]"><svg class="size-[18px]"><use href="#ico-prop"/></svg></span>
        <div class="absolute right-0 bottom-0 flex w-[36px] h-[19px] bg-[#fbfbfb] border-l border-t border-[#e8e8e8]">
          <span class="flex items-center justify-center w-[18px] border-r border-[#ccc]"><svg class="w-[4px] h-[6px]" viewBox="0 0 4 6"><path d="M4 0v6L0 3z"/></svg></span>
          <span class="flex items-center justify-center w-[18px]"><svg class="w-[4px] h-[6px]" viewBox="0 0 4 6"><path d="M0 0v6l4-3z"/></svg></span>
        </div>
      </div>
      <div class="flex items-center ml-[4px] w-[219px] h-[26px] pl-[2px] border border-[#c3c3c3]"><svg class="size-[18px]"><use href="#ico-funnel"/></svg></div>
      <div class="flex items-center h-[22px] pl-[4px] mr-[2px] overflow-hidden whitespace-nowrap"><svg class="size-[18px] shrink-0 mr-[4px]"><use href="#ico-part"/></svg>BRACKET (Default) &lt;&lt;Default&gt;_Displa</div>
      <ul class="flex flex-col">
        <li class="flex items-center h-[22px]"><svg class="w-[4px] h-[7px] ml-[9px] mr-[12px]" viewBox="0 0 4 7"><path d="M0 0v7l4-3.500z" fill="#555"/></svg><svg class="size-[18px] mr-[5px]"><use href="#ico-folder"/></svg>Folder</li>
        <li class="flex items-center h-[22px] pl-[25px]"><svg class="size-[18px] mr-[5px]"><use href="#ico-sensor"/></svg>Sensors</li>
        <li class="flex items-center h-[22px]"><svg class="w-[4px] h-[7px] ml-[9px] mr-[12px]" viewBox="0 0 4 7"><path d="M0 0v7l4-3.500z" fill="#555"/></svg><svg class="size-[18px] mr-[5px]"><use href="#ico-annot"/></svg>Annotations</li>
        <li class="flex items-center h-[22px]"><svg class="w-[4px] h-[7px] ml-[9px] mr-[12px]" viewBox="0 0 4 7"><path d="M0 0v7l4-3.500z" fill="#555"/></svg><svg class="size-[18px] mr-[5px]"><use href="#ico-solid"/></svg>Solid Bodies(1)</li>
        <li class="flex items-center h-[22px] pl-[25px]"><svg class="size-[18px] mr-[5px]"><use href="#ico-mat"/></svg>Material &lt;not specified&gt;</li>
        <li class="flex items-center h-[22px] pl-[25px]"><svg class="size-[18px] mr-[5px]"><use href="#ico-plane"/></svg>Front Plane</li>
        <li class="flex items-center h-[22px] pl-[25px]"><svg class="size-[18px] mr-[5px]"><use href="#ico-plane"/></svg>Top Plane</li>
        <li class="flex items-center h-[22px] pl-[25px]"><svg class="size-[18px] mr-[5px]"><use href="#ico-plane"/></svg>Right Plane</li>
        <li class="flex items-center h-[22px] pl-[25px]"><svg class="size-[18px] mr-[5px]"><use href="#ico-origin"/></svg>Origin</li>
        <li class="flex items-center h-[22px]"><svg class="w-[4px] h-[7px] ml-[9px] mr-[12px]" viewBox="0 0 4 7"><path d="M0 0v7l4-3.500z" fill="#555"/></svg><svg class="size-[18px] mr-[5px]"><use href="#ico-boss"/></svg>Boss-Extrude1</li>
        <li class="flex items-center h-[22px]"><svg class="w-[4px] h-[7px] ml-[9px] mr-[12px]" viewBox="0 0 4 7"><path d="M0 0v7l4-3.500z" fill="#555"/></svg><svg class="size-[18px] mr-[5px]"><use href="#ico-cut"/></svg>Cut-Extrude1</li>
        <li class="flex items-center h-[22px]"><svg class="w-[4px] h-[7px] ml-[9px] mr-[12px]" viewBox="0 0 4 7"><path d="M0 0v7l4-3.500z" fill="#555"/></svg><svg class="size-[18px] mr-[5px]"><use href="#ico-cut"/></svg>Cut-Extrude2</li>
      </ul>
      <div class="h-[3px] mr-[2px] bg-[#3b8fc8]"></div>
      <div class="flex-1"></div>
      <div class="flex items-center h-[17px] mr-[2px] pl-[17px] bg-[#eee] border-t border-white"><i class="w-[155px] h-[2px] bg-[#888]"></i></div>
      <div class="h-[3px] mt-px mr-[2px] border-t border-b border-[#c3c3c3]"></div>
    </aside>

    <!-- Four viewports -->
    <div class="grid grid-cols-[841px_4px_845px] grid-rows-[457px_4px_466px] bg-white">
      <svg class="w-[841px] h-[457px]" viewBox="230 117 841 457">
        <defs>
          <linearGradient id="rim" gradientUnits="userSpaceOnUse" x1="706" y1="0" x2="904" y2="0"><stop offset="0" stop-color="#005a5a"/><stop offset=".22" stop-color="#007a79"/><stop offset=".45" stop-color="#009291"/><stop offset=".85" stop-color="#008f8f"/><stop offset="1" stop-color="#007070"/></linearGradient>
          <linearGradient id="bore" x1="0" y1="0" x2="1" y2="0"><stop offset="0" stop-color="#006666"/><stop offset=".2" stop-color="#008a89"/><stop offset=".5" stop-color="#009291"/><stop offset=".78" stop-color="#006f6e"/><stop offset="1" stop-color="#003c3c"/></linearGradient>
          <clipPath id="c1"><ellipse cx="591.400" cy="372" rx="65.500" ry="37.600"/></clipPath>
          <clipPath id="c2"><ellipse cx="786.200" cy="399" rx="52.400" ry="30.400"/></clipPath>
          <clipPath id="c3"><ellipse cx="786.200" cy="441.700" rx="52.400" ry="30.400"/></clipPath>
        </defs>
        <g stroke="#000" stroke-width="1.200" stroke-linejoin="round">
          <path d="m572.900 179.500 37.200 21.700L443.400 297l-37.200-20.800z" fill="#00d7d7"/>
          <path d="M610.100 201.200v85.500L443.400 382.500V297z" fill="#008f8f"/>
          <path d="m610.100 286.700 55.400 31.800-92.600 53.700v85.300l-129.500-75z" fill="#00d7d7"/>
          <ellipse cx="591.400" cy="372" rx="65.500" ry="37.600" fill="url(#bore)"/>
          <g clip-path="url(#c1)"><ellipse cx="591.400" cy="414.500" rx="65.500" ry="37.600" fill="#fff"/></g>
          <ellipse cx="591.400" cy="372" rx="65.500" ry="37.600" fill="none"/>
          <path d="M610.100 436.300 684 479.700l-73.900 42z" fill="#008f8f"/>
          <path d="M406.200 276.200 443.400 297v85.500l129.500 75v-85.300l133.500 77.300v42.300l-96.300-55.500v85.400L406.200 404.300z" fill="#005c5c"/>
          <path d="M706.400 449.500v42.300A118.300 68.200 0 0 0 786.200 509.300A118.300 68.200 0 0 0 904.500 441.500V399z" fill="url(#rim)"/>
          <path d="M572.900 372.200 739.900 276 866 348.500A118.300 68 0 0 1 904.500 399A118.300 68 0 0 1 786.200 466.800A118.300 68 0 0 1 706.400 449.500z" fill="#00d7d7"/>
          <path d="M866 450v41.700M873.400 446v41" fill="none"/>
          <ellipse cx="786.200" cy="399" rx="52.400" ry="30.400" fill="url(#bore)"/>
          <g clip-path="url(#c2)"><ellipse cx="786.200" cy="441.700" rx="52.400" ry="30.400" fill="#fff"/><g clip-path="url(#c3)"><path d="M777.100 400v26.400l-40 22V400z" fill="#008f8f"/></g><ellipse cx="786.200" cy="441.700" rx="52.400" ry="30.400" fill="none"/></g>
          <ellipse cx="786.200" cy="399" rx="52.400" ry="30.400" fill="none"/>
        </g>
        <g stroke-width="4"><path d="M271 515v-18" stroke="#7fe07f"/><path d="m271 516-14 8" stroke="#0000a8"/><path d="m271 516 14 8" stroke="#b00000"/></g>
        <path d="m271 491 4 9h-8z" fill="#0b5d0b"/><path d="m250.500 527.500 5-7 3.500 6.500z" fill="#0000a8"/><path d="m291.500 527.500-9-.5 4-6z" fill="#a80000"/>
        <g font-family="Liberation Sans" font-size="9" text-anchor="middle"><text x="271.500" y="487" fill="#0a8a0a">Y</text><text x="246.500" y="531.500" fill="#22f">Z</text><text x="296.500" y="531.500" fill="#f33">X</text></g>
        <text x="241.500" y="568.500" font-family="Noto Sans" font-size="12.500" font-weight="bold" fill="#111" textLength="64">*Isometric</text>
      </svg>
      <div class="row-span-3 bg-[#c3c8dc] border-l border-r border-l-[#55597a] border-r-[#383c58]"></div>
      <svg class="w-[845px] h-[457px]" viewBox="1075 117 845 457">
        <g stroke="#000" stroke-width="1.200">
          <path d="M1209.700 172.600H1711.500A141 141 0 0 1 1711.500 454.700H1209.700z" fill="#05d8d8"/>
          <path d="M1272.500 172.500v282M1492 172.500v282"/>
          <circle cx="1382" cy="313.600" r="78.300" fill="#fff"/><circle cx="1711.500" cy="313.600" r="62.600" fill="#fff"/>
        </g>
        <path d="M1114 516h21" stroke="#f04040" stroke-width="4"/><path d="m1143.500 516-9-4.500v9z" fill="#c00000"/><path d="M1114 517v22" stroke="#0000a8" stroke-width="4"/><path d="m1114 546-4-9h8z" fill="#0000a8"/><circle cx="1114" cy="515.500" r="4" fill="#0d5c14"/><path d="m1114 512 3.500 4-3 3z" fill="#a5f0a5"/>
        <g font-family="Liberation Sans" font-size="9" text-anchor="middle"><text x="1150.500" y="516.500" fill="#f22">X</text><text x="1114.500" y="552" fill="#22f">Z</text></g>
        <use href="#ico-link" x="1090" y="559.500" width="16" height="9"/>
        <text x="1109.500" y="568.500" font-family="Noto Sans" font-size="12.500" font-weight="bold" fill="#111" textLength="28.500">*Top</text>
      </svg>
      <div class="bg-[#c3c8dc] border-t border-b border-t-[#55597a] border-b-[#383c58]"></div>
      <div class="bg-[#c3c8dc] border-t border-b border-t-[#55597a] border-b-[#383c58]"></div>
      <svg class="w-[841px] h-[466px]" viewBox="230 578 841 466">
        <g fill="none" stroke="#bdbdbd" stroke-width="1">
          <path d="M543.500 652v104M756.500 652v104M516.500 868v104M783.500 868v104" stroke-dasharray="3 3"/>
          <path d="M661 652v104" stroke-width="2" stroke-dasharray="3 3"/>
          <path d="M639 650v106" stroke="#cfcfcf" stroke-width="2"/>
          <path d="M408 757h484M408 865h484" stroke="#dedede" stroke-width="2"/>
          <path d="M408 757h484M408 865h484" stroke-width="2" stroke-dasharray="3 3"/>
          <path d="M543 757h214M516 865h268" stroke-width="2" stroke-dasharray="8 1"/>
        </g>
        <path d="M407 649h486v324H407z" fill="none" stroke="#000" stroke-width="2"/>
        <path d="M787 649h106M893 967v6" stroke="#ff8000" stroke-width="2"/>
        <path d="M271 985v-18" stroke="#8ff08f" stroke-width="4"/><path d="m271 958 4 9h-8z" fill="#0b5d0b"/><path d="M271 986h22" stroke="#0000a8" stroke-width="4"/><path d="m300.500 986-8-4v8z" fill="#0000a8"/><circle cx="271" cy="986.500" r="3.500" fill="#b00000"/><path d="m270 985 3-3v4z" fill="#0b5d0b"/>
        <g font-family="Liberation Sans" font-size="9" text-anchor="middle"><text x="271.500" y="950" fill="#0a8a0a">Y</text><text x="307.500" y="986.500" fill="#22f">Z</text></g>
        <use href="#ico-link" x="242" y="1029.500" width="16" height="9"/>
        <text x="261.500" y="1038.500" font-family="Noto Sans" font-size="12.500" font-weight="bold" fill="#111" textLength="28.500">*Left</text>
      </svg>
      <svg class="w-[845px] h-[466px]" viewBox="1075 578 845 466">
        <defs><linearGradient id="nose" x1="0" x2="1"><stop offset="0" stop-color="#009c9c"/><stop offset=".3" stop-color="#00a5a5"/><stop offset=".65" stop-color="#00a5a5"/><stop offset=".88" stop-color="#009494"/><stop offset="1" stop-color="#007676"/></linearGradient></defs>
        <g stroke="#000" stroke-width="1.200">
          <path d="M1202.500 697.500h64v128.500h225V697.500h232v64h-167.300v129H1202.500z" fill="#039b9b"/>
          <path d="M1723.500 697.500h138v64h-138z" fill="url(#nose)"/>
        </g>
        <path d="M1114 986v-22" stroke="#0b6d0b" stroke-width="3.500"/><path d="m1114 956 4 10h-8z" fill="#0b5d0b"/><path d="M1114 986h22" stroke="#f03030" stroke-width="3.500"/><path d="m1143.500 986-8-4.500v9z" fill="#c00000"/><circle cx="1114" cy="986" r="4" fill="#0000a8"/>
        <g font-family="Liberation Sans" font-size="9" text-anchor="middle"><text x="1114.500" y="950" fill="#0a8a0a">Y</text><text x="1150.500" y="986.500" fill="#f22">X</text></g>
        <use href="#ico-link" x="1090" y="1029.500" width="16" height="9"/>
        <text x="1109.500" y="1038.500" font-family="Noto Sans" font-size="12.500" font-weight="bold" fill="#111" textLength="38.500">*Front</text>
      </svg>
    </div>

    <!-- Command tabs over the viewports -->
    <div class="absolute left-0 top-0 flex h-[22px] text-[#222] text-center leading-[21px] tracking-[-0.4px] border-b border-[#7d7d7d] bg-[#d4d4d4]">
      <span class="w-[63px] bg-[#f7f7f7] -mt-px pt-px font-semibold text-[#333] tracking-[-0.2px]">Features</span>
      <span class="w-[57px] border-l border-r border-[#7d7d7d]">Sketch</span>
      <span class="w-[57px] border-r border-[#7d7d7d] tracking-[-0.2px]">Markup</span>
      <span class="w-[60px] border-r border-[#7d7d7d]">Evaluate</span>
      <span class="w-[107px] border-r border-[#7d7d7d]">MBD Dimensions</span>
      <span class="w-[133px] border-r border-[#7d7d7d]">SOLIDWORKS Add-Ins</span>
      <span class="w-[56px] border-r border-[#7d7d7d]">MBD</span>
      <span class="w-[121px] border-r border-[#7d7d7d]">SOLIDWORKS CAM</span>
      <span class="w-[146px] border-r border-[#7d7d7d]">SOLIDWORKS CAM TBM</span>
      <span class="w-[146px] border-r border-[#7d7d7d]">SOLIDWORKS Inspection</span>
    </div>

    <!-- Heads-up view toolbar -->
    <div class="absolute left-[471px] top-[28px] flex items-center h-[18px] fill-[#777]">
      <span class="flex justify-center w-[26px]"><svg class="size-[18px]"><use href="#ico-fit"/></svg></span>
      <span class="flex justify-center w-[26px]"><svg class="size-[18px]"><use href="#ico-area"/></svg></span>
      <span class="flex justify-center w-[26px]"><svg class="size-[18px]"><use href="#ico-prev"/></svg></span>
      <span class="flex justify-center w-[26px]"><svg class="size-[18px]"><use href="#ico-sect"/></svg></span>
      <span class="flex justify-center w-[26px]"><svg class="size-[18px]"><use href="#ico-dyn"/></svg></span>
      <span class="flex justify-center w-[26px]"><svg class="size-[18px]"><use href="#ico-orient"/></svg></span>
      <span class="flex justify-center w-[14px]"><svg class="w-[6px] h-[4px]"><use href="#dn"/></svg></span>
      <span class="flex justify-center w-[26px]"><svg class="size-[18px]"><use href="#ico-disp"/></svg></span>
      <span class="flex justify-center w-[14px]"><svg class="w-[6px] h-[4px]"><use href="#dn"/></svg></span>
      <span class="flex justify-center w-[26px]"><svg class="size-[18px]"><use href="#ico-eye"/></svg></span>
      <span class="flex justify-center w-[14px]"><svg class="w-[6px] h-[4px]"><use href="#dn"/></svg></span>
      <span class="flex justify-center w-[26px]"><svg class="size-[20px]"><use href="#ico-editapp"/></svg></span>
      <span class="flex justify-center w-[26px]"><svg class="size-[20px]"><use href="#ico-scene"/></svg></span>
      <span class="flex justify-center w-[14px]"><svg class="w-[6px] h-[4px]"><use href="#dn"/></svg></span>
      <span class="flex justify-center w-[26px]"><svg class="size-[18px]"><use href="#ico-monitor"/></svg></span>
      <span class="flex justify-center w-[14px]"><svg class="w-[6px] h-[4px]"><use href="#dn"/></svg></span>
    </div>

    <!-- Document window controls -->
    <div class="absolute left-[1784px] top-[8px] flex items-center h-[14px] text-[#a3a3a3]">
      <span class="flex justify-center w-[26px]"><svg class="w-[12px] h-[14px]" viewBox="0 0 12 14"><path d="M.5 1h11v12.500H.5z" fill="none" stroke="#a3a3a3" stroke-width="1.400"/><path d="M5 4v7L1.500 7.500z" fill="#a3a3a3"/></svg></span>
      <span class="flex justify-center w-[26px]"><svg class="w-[12px] h-[14px]" viewBox="0 0 12 14"><path d="M.5 1h11v12.500H.5z" fill="none" stroke="#a3a3a3" stroke-width="1.400"/><path d="M7 4v7l3.500-3.500z" fill="#a3a3a3"/></svg></span>
      <span class="flex justify-center w-[26px] pt-[10px]"><i class="w-[10px] h-[2px] bg-[#a3a3a3]"></i></span>
      <span class="flex justify-center w-[27px]"><svg class="w-[16px] h-[14px]"><use href="#ico-restore"/></svg></span>
      <span class="flex justify-center w-[25px]"><svg class="size-[11px]" viewBox="0 0 11 11"><path d="m1 1 9 9M10 1l-9 9" stroke="#a3a3a3" stroke-width="1.500"/></svg></span>
    </div>

    <!-- Task pane -->
    <div class="absolute left-[1894px] top-[50px] flex flex-col w-[26px] border-l border-t border-[#7d7d7d] bg-[#d1d1d1]">
      <span class="flex items-center justify-center h-[24px] border-b border-[#7d7d7d]"><svg class="size-[20px]"><use href="#ico-3dx"/></svg></span>
      <span class="flex items-center justify-center h-[24px] border-b border-[#7d7d7d]"><svg class="size-[18px]"><use href="#ico-home"/></svg></span>
      <span class="flex items-center justify-center h-[24px] border-b border-[#7d7d7d]"><svg class="size-[18px]"><use href="#ico-books"/></svg></span>
      <span class="flex items-center justify-center h-[24px] border-b border-[#7d7d7d]"><svg class="w-[20px] h-[18px]"><use href="#ico-fold2"/></svg></span>
      <span class="flex items-center justify-center h-[24px] border-b border-[#7d7d7d]"><svg class="size-[18px]"><use href="#ico-view"/></svg></span>
      <span class="flex items-center justify-center h-[24px] border-b border-[#7d7d7d] bg-[#f7f7f7]"><svg class="size-[17px]"><use href="#ico-ball"/></svg></span>
      <span class="flex items-center justify-center h-[24px] border-b border-[#7d7d7d]"><svg class="size-[18px]"><use href="#ico-prop"/></svg></span>
    </div>

    <!-- Panel flyout handle -->
    <div class="absolute left-[229px] top-[444px] flex items-center justify-center w-[9px] h-[39px] bg-[#f7f7f7] border border-l-0 border-[#8a8a8a]"><i class="size-[6px] rounded-full bg-[#ccc] border border-[#999]"></i></div>
  </main>

  <!-- Document tabs -->
  <div class="flex h-[16px] shrink-0 border-t border-b border-[#7d7d7d] text-center leading-[12px] text-[#222]">
    <div class="flex w-[67px] pl-[2px] gap-px bg-[#aaa]">
      <span class="flex items-center justify-center w-[15px] bg-[#b9b9b9] border border-[#999]"><svg class="w-[8px] h-[9px]" viewBox="0 0 8 9"><path d="M7 0v9L2 4.500zM0 0h1v9H0z" fill="#888"/></svg></span>
      <span class="flex items-center justify-center w-[15px] bg-[#b9b9b9] border border-[#999]"><svg class="w-[8px] h-[9px]" viewBox="0 0 8 9"><path d="M6 0v9L1 4.500z" fill="#888"/></svg></span>
      <span class="flex items-center justify-center w-[15px] bg-[#b9b9b9] border border-[#999]"><svg class="w-[8px] h-[9px]" viewBox="0 0 8 9"><path d="M2 0v9l5-4.500z" fill="#888"/></svg></span>
      <span class="flex items-center justify-center w-[15px] bg-[#b9b9b9] border border-[#999]"><svg class="w-[8px] h-[9px]" viewBox="0 0 8 9"><path d="M1 0v9l5-4.500zM7 0h1v9H7z" fill="#888"/></svg></span>
    </div>
    <span class="w-[57px] font-bold text-black pl-1 border-r border-[#7d7d7d]">Model</span>
    <span class="w-[68px] bg-[#d4d4d4] border-r border-[#7d7d7d]">3D Views</span>
    <span class="w-[108px] bg-[#d4d4d4] border-r border-[#7d7d7d] pr-2">Motion Study 1</span>
  </div>

  <!-- Status bar -->
  <footer class="flex items-center h-[18px] shrink-0 pl-px pt-px">
    <span class="w-[1634px] tracking-[-0.48px]">SOLIDWORKS Premium 2024 SP1.0</span>
    <span class="w-[180px] tracking-[-0.4px]">Editing Part</span>
    <span class="w-[53px]">MMGS</span>
    <svg class="w-[6px] h-[4px] -scale-y-100"><use href="#dn"/></svg>
    <svg class="w-[17px] h-[15px] ml-[27px]" viewBox="0 0 17 15"><path d="m1 2 7-1.500 8 6-5 8L2 9z" fill="#ddd" stroke="#333"/><path d="m3 10 8 4.500 5.500-8M5 4l3 1M8 3l3 4-3 1.500" fill="none" stroke="#333"/></svg>
  </footer>
  <div class="flex items-center h-[2px] shrink-0 bg-[#2e302c]">
    <svg class="w-[1920px] h-[2px]" viewBox="0 0 1920 2"><path d="M700 1h20M728 1h14M752 1h26M800 1h12M822 1h20M858 1h8M884 1h30" stroke="#ddd" stroke-width="2" stroke-dasharray="3 2"/><path d="M1000 1h95" stroke="#eee" stroke-width="2"/><path d="M1118 1h117" stroke="#000" stroke-width="2"/><path d="M1103 1h12M1185 1h8M1210 1h22" stroke="#ccc" stroke-width="2" stroke-dasharray="2 2"/></svg>
  </div>
</div>
</body>
</html>
